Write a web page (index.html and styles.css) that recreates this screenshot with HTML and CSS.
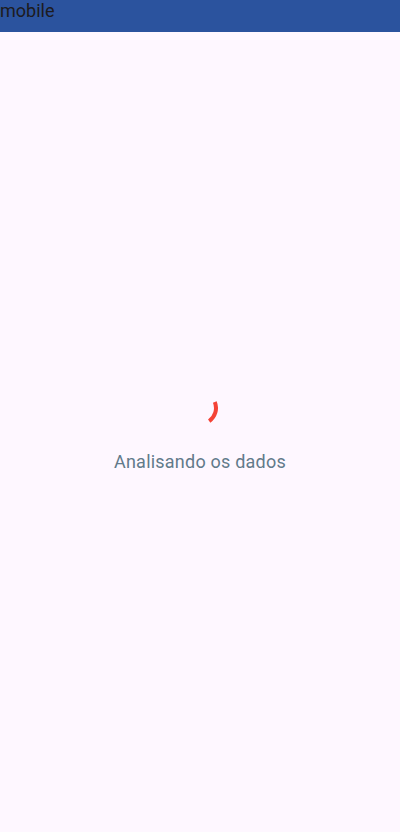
FILE: index.html
```html
<!DOCTYPE html>
<html lang="pt">
<head>
<meta charset="utf-8">
<link rel="stylesheet" href="styles.css">
<title>mobile</title>
</head>
<body>
<header class="appbar">mobile</header>
<main class="content">
  <div class="loader">
    <svg class="spinner" width="36" height="36" viewBox="0 0 36 36">
      <path d="M 32.8 12 A 16 16 0 0 1 27.2 31.1" fill="none" stroke="#f44336" stroke-width="4"/>
    </svg>
    <p class="label">Analisando os dados</p>
  </div>
</main>
</body>
</html>
```
FILE: styles.css
```css
html, body {
  margin: 0;
  padding: 0;
  height: 100%;
}
body {
  background: #fef7ff;
  font-family: Roboto, "Noto Sans", sans-serif;
  display: flex;
  flex-direction: column;
}
.appbar {
  height: 32px;
  background: #2b539e;
  color: #1d1b20;
  font-size: 18px;
  line-height: 22px;
  box-sizing: border-box;
}
.content {
  flex: 1;
  display: flex;
  align-items: center;
  justify-content: center;
}
.loader {
  display: flex;
  flex-direction: column;
  align-items: center;
  gap: 24px;
}
.spinner {
  display: block;
}
.label {
  margin: 0;
  font-size: 18px;
  letter-spacing: 0.22px;
  line-height: 24px;
  color: #627a8a;
}
```
